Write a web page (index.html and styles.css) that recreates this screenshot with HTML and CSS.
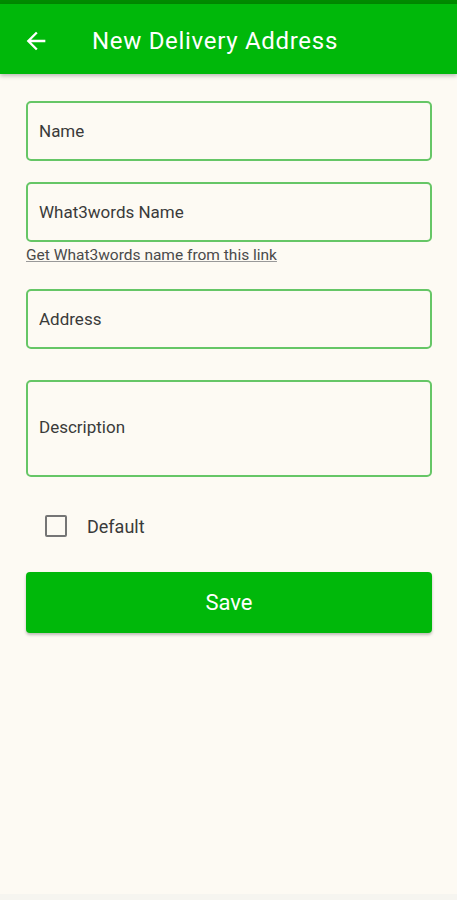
FILE: index.html
```html
<!DOCTYPE html>
<html lang="en">
<head>
    <meta charset="UTF-8">
    <meta name="viewport" content="width=device-width, initial-scale=1.0">
    <title>New Delivery Address</title>
    <link rel="stylesheet" href="styles.css">
</head>
<body>

<div class="status-bar"></div>

<header class="app-bar">
    <button class="back-btn" aria-label="Back">
        <svg width="28" height="28" viewBox="0 0 24 24">
            <path d="M20 11H7.83l5.59-5.59L12 4l-8 8 8 8 1.41-1.41L7.83 13H20v-2z" fill="#fff"/>
        </svg>
    </button>
    <h1 class="title">New Delivery Address</h1>
</header>

<main class="form">
    <div class="field">
        <input type="text" placeholder="Name">
    </div>

    <div class="field with-link">
        <input type="text" placeholder="What3words Name">
    </div>
    <a class="help-link" href="#">Get What3words name from this link</a>

    <div class="field address">
        <input type="text" placeholder="Address">
    </div>

    <div class="field tall">
        <textarea placeholder="Description"></textarea>
    </div>

    <label class="check-row">
        <span class="box"></span>
        <span>Default</span>
    </label>

    <button class="save-btn">Save</button>
</main>

<div class="nav-strip"></div>

</body>
</html>
```

FILE: styles.css
```css
* {
    box-sizing: border-box;
}

body {
    margin: 0;
    background-color: #fdfaf3;
    font-family: Roboto, "Noto Sans", Arial, sans-serif;
    width: 457px;
    height: 900px;
    display: flex;
    flex-direction: column;
}

.status-bar {
    height: 4px;
    background-color: #008a00;
}

.app-bar {
    height: 70px;
    background-color: #00b80a;
    display: flex;
    align-items: center;
    box-shadow: 0 2px 4px rgba(0, 0, 0, 0.25);
}
.back-btn {
    background: none;
    border: none;
    padding: 0;
    margin: 4px 0 0 22px;
    width: 28px;
    height: 28px;
}
.title {
    margin: 3px 0 0 42px;
    color: #fff;
    font-size: 24px;
    font-weight: 400;
    letter-spacing: 0.7px;
}

.form {
    flex: 1;
    padding: 27px 25px 0 26px;
    display: flex;
    flex-direction: column;
}

.field {
    height: 60px;
    border: 2px solid #66c666;
    border-radius: 5px;
    display: flex;
    margin-bottom: 21px;
}
.field.with-link {
    margin-bottom: 3px;
}
.field.address {
    margin-bottom: 31px;
}
.field.tall {
    height: 97px;
    margin-bottom: 0;
}
.field input,
.field textarea {
    flex: 1;
    border: none;
    background: transparent;
    font-family: inherit;
    font-size: 17px;
    padding: 0 11px;
    color: #333;
    outline: none;
}
.field textarea {
    resize: none;
    padding-top: 35px;
    line-height: 20px;
}
.field ::placeholder {
    color: #3a3a3a;
}

.help-link {
    color: #4a4a4a;
    font-size: 15.5px;
    line-height: 20px;
    text-decoration: underline;
    text-decoration-color: #999;
    margin-bottom: 24px;
}

.check-row {
    display: flex;
    align-items: center;
    margin: 37px 0 0 19px;
    font-size: 18px;
    color: #3a3a3a;
    height: 24px;
}
.check-row .box {
    width: 22px;
    height: 22px;
    border: 2px solid #757575;
    border-radius: 2px;
    margin-right: 20px;
}

.save-btn {
    margin-top: 34px;
    height: 61px;
    background-color: #00b80a;
    color: #fff;
    border: none;
    border-radius: 4px;
    font-family: inherit;
    font-size: 22px;
    box-shadow: 0 2px 3px rgba(0, 0, 0, 0.25);
}

.nav-strip {
    height: 6px;
    background-color: #f6f5f0;
}
```
